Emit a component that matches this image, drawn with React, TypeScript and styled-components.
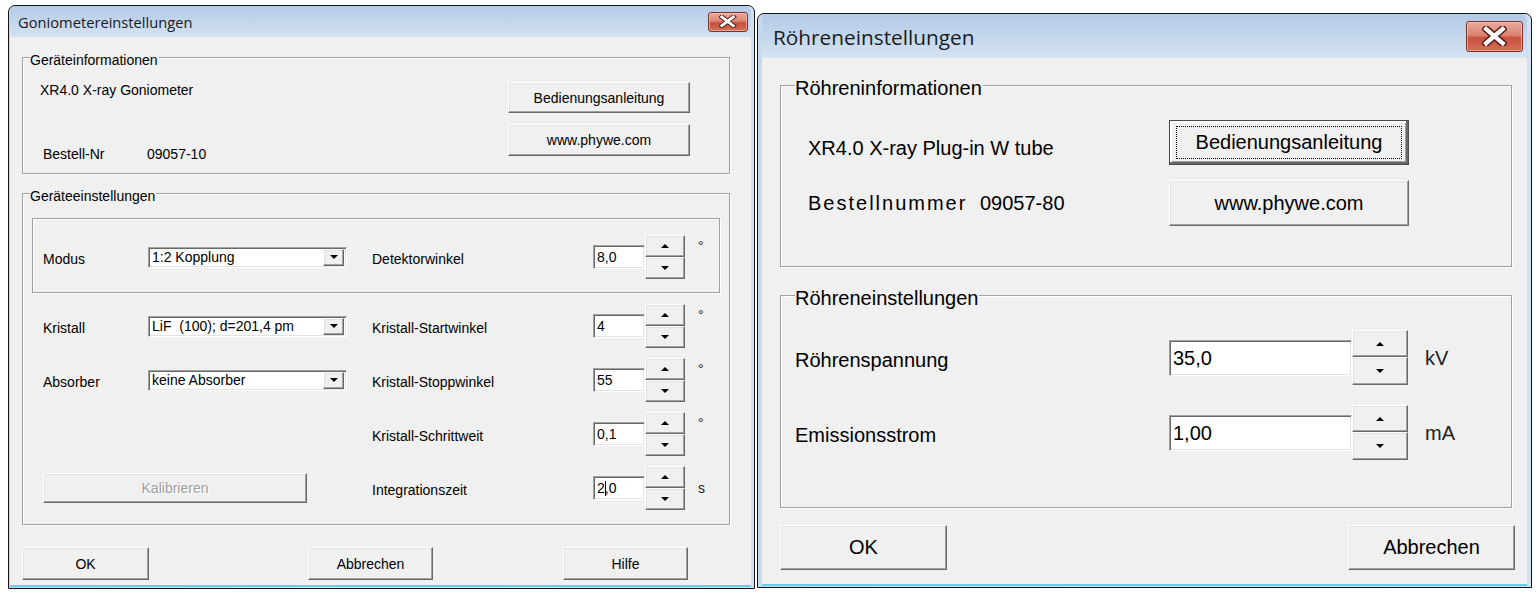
import React from 'react';
import styled, { createGlobalStyle, css } from 'styled-components';

/* ------------------------------------------------------------------ */
/* Global                                                             */
/* ------------------------------------------------------------------ */

const GlobalStyle = createGlobalStyle`
  html, body {
    margin: 0;
    padding: 0;
    background: #ffffff;
  }
  body {
    font-family: "Liberation Sans", Arial, sans-serif;
    color: #000;
  }
  * {
    box-sizing: border-box;
  }
`;

const FACE = '#f0f0f0';

/* classic 3D bevels */
const raised = css`
  background: ${FACE};
  border: 1px solid;
  border-color: #ffffff #696969 #696969 #ffffff;
  box-shadow: inset -1px -1px 0 #a0a0a0, inset 1px 1px 0 #e3e3e3;
`;

const sunken = css`
  background: #ffffff;
  border: 1px solid;
  border-color: #a0a0a0 #ffffff #ffffff #a0a0a0;
  box-shadow: inset 1px 1px 0 #696969, inset -1px -1px 0 #e3e3e3;
`;

/* ------------------------------------------------------------------ */
/* Window chrome                                                      */
/* ------------------------------------------------------------------ */

const Screen = styled.div`
  display: flex;
  align-items: flex-start;
  width: 1540px;
  height: 593px;
  overflow: hidden;
`;

const Window = styled.div<{ $w: number; $h: number; $mt: number; $ml: number; $side: number }>`
  width: ${(p) => p.$w}px;
  height: ${(p) => p.$h}px;
  margin: ${(p) => p.$mt}px 0 0 ${(p) => p.$ml}px;
  display: flex;
  flex-direction: column;
  border: 1px solid #141414;
  border-radius: 7px 7px 0 0;
  padding: 0 ${(p) => p.$side}px 1px ${(p) => (p.$side > 3 ? p.$side : 1)}px;
  background: linear-gradient(to right, #c9d9ec, #dbe6f3 40%, #d3e0f0);
`;

const TitleBar = styled.div<{ $h: number; $pl: number }>`
  height: ${(p) => p.$h}px;
  flex: none;
  display: flex;
  align-items: center;
  justify-content: space-between;
  padding: 0 0 0 ${(p) => p.$pl}px;
  background: linear-gradient(to bottom, #b3cae5 0%, #c1d5ec 45%, #d5e3f2 100%);
  border-radius: 6px 6px 0 0;
`;

const Title = styled.span<{ $fs: number }>`
  font-family: "Open Sans", "Noto Sans", sans-serif;
  font-size: ${(p) => p.$fs}px;
  color: #1b1b1b;
  line-height: 1.2;
  margin-top: 2px;
`;

const CloseButton = styled.div<{ $w: number; $h: number; $mr: number }>`
  width: ${(p) => p.$w}px;
  height: ${(p) => p.$h}px;
  margin-right: ${(p) => p.$mr}px;
  display: flex;
  align-items: center;
  justify-content: center;
  border: 1px solid #7a3328;
  border-radius: 3px;
  background: linear-gradient(to bottom, #e9a99c 0%, #dc8474 45%, #c7503c 55%, #d56f57 100%);
  box-shadow: inset 0 0 0 1px rgba(255, 210, 200, 0.55);

  svg {
    width: 45%;
    height: 70%;
  }
`;

const Client = styled.div<{ $pt: number; $pl: number }>`
  flex: 1;
  display: flex;
  flex-direction: column;
  align-items: flex-start;
  background: ${FACE};
  border-bottom: 2px solid #6ccbe9;
  padding: ${(p) => p.$pt}px 0 0 ${(p) => p.$pl}px;
`;

/* ------------------------------------------------------------------ */
/* Group boxes                                                        */
/* ------------------------------------------------------------------ */

const Group = styled.div<{ $w: number; $h: number; $mt?: number }>`
  position: relative;
  width: ${(p) => p.$w}px;
  height: ${(p) => p.$h}px;
  margin-top: ${(p) => p.$mt ?? 0}px;
  border: 1px solid #a0a0a0;
  box-shadow: inset 1px 1px 0 #ffffff, 1px 1px 0 #ffffff;
`;

const Legend = styled.span<{ $fs: number; $left: number; $top: number }>`
  position: absolute;
  left: ${(p) => p.$left}px;
  top: ${(p) => p.$top}px;
  font-size: ${(p) => p.$fs}px;
  line-height: ${(p) => Math.round(p.$fs * 1.18)}px;
  background: ${FACE};
  padding-right: 1px;
  white-space: nowrap;
`;

const InnerBox = styled.div`
  width: 688px;
  border: 1px solid #a0a0a0;
  box-shadow: inset 1px 1px 0 #ffffff, 1px 1px 0 #ffffff;
  padding: 16px 0 13px 10px;
`;

/* ------------------------------------------------------------------ */
/* Controls                                                           */
/* ------------------------------------------------------------------ */

const Button = styled.button<{ $w: number; $h: number; $fs: number; $ml?: number; $focused?: boolean }>`
  ${raised};
  position: relative;
  width: ${(p) => p.$w}px;
  height: ${(p) => p.$h}px;
  margin-left: ${(p) => p.$ml ?? 0}px;
  padding: 0;
  font-family: "Liberation Sans", Arial, sans-serif;
  font-size: ${(p) => p.$fs}px;
  color: #000;
  flex: none;

  &:disabled {
    color: #a0a0a0;
    text-shadow: 1px 1px 0 #ffffff;
  }

  ${(p) =>
    p.$focused &&
    css`
      border-color: #4a4a4a;
      box-shadow: inset -2px -2px 0 #696969, inset 2px 2px 0 #ffffff, inset -3px -3px 0 #a0a0a0;
      &::after {
        content: '';
        position: absolute;
        inset: 5px 6px;
        border: 1px dotted #000;
      }
    `}
`;

const Arrow = styled.span<{ $dir: 'up' | 'down'; $size: number }>`
  width: 0;
  height: 0;
  border-left: ${(p) => p.$size}px solid transparent;
  border-right: ${(p) => p.$size}px solid transparent;
  ${(p) =>
    p.$dir === 'up'
      ? css`border-bottom: ${Math.ceil(p.$size * 0.8)}px solid #000;`
      : css`border-top: ${Math.ceil(p.$size * 0.8)}px solid #000;`}
`;

const Combo = styled.div`
  ${sunken};
  width: 199px;
  height: 21px;
  display: flex;
  align-items: center;
  justify-content: space-between;
  padding: 2px 2px 2px 3px;
  font-size: 14px;
  white-space: pre;
`;

const ComboDrop = styled.span`
  ${raised};
  width: 21px;
  height: 17px;
  display: flex;
  align-items: center;
  justify-content: center;
`;

const SpinField = styled.div`
  display: flex;
  align-items: center;
`;

const NumInput = styled.div<{ $w: number; $h: number; $fs: number }>`
  ${sunken};
  width: ${(p) => p.$w}px;
  height: ${(p) => p.$h}px;
  display: flex;
  align-items: center;
  padding-left: 3px;
  font-size: ${(p) => p.$fs}px;
`;

const SpinStack = styled.div<{ $w: number }>`
  width: ${(p) => p.$w}px;
  display: flex;
  flex-direction: column;
`;

const SpinHalf = styled.div<{ $h: number }>`
  ${raised};
  height: ${(p) => p.$h}px;
  display: flex;
  align-items: center;
  justify-content: center;
`;

const Caret = styled.span`
  display: inline-block;
  width: 1px;
  height: 15px;
  background: #000;
  margin: 0 -1px 0 0;
  vertical-align: -2px;
`;

/* ------------------------------------------------------------------ */
/* Text / layout pieces                                               */
/* ------------------------------------------------------------------ */

const InfoGroupBody = styled.div<{ $pt: number; $pr: number; $pl: number }>`
  display: flex;
  justify-content: space-between;
  padding: ${(p) => p.$pt}px ${(p) => p.$pr}px 0 ${(p) => p.$pl}px;
`;

const InfoColumn = styled.div<{ $pt: number; $gap: number; $fs: number }>`
  display: flex;
  flex-direction: column;
  gap: ${(p) => p.$gap}px;
  padding-top: ${(p) => p.$pt}px;
  font-size: ${(p) => p.$fs}px;
  line-height: ${(p) => Math.round(p.$fs * 1.18)}px;
`;

const InfoLine = styled.div`
  display: flex;
  white-space: nowrap;
`;

const InfoKey = styled.span<{ $w: number; $pl?: number; $ls?: number }>`
  width: ${(p) => p.$w}px;
  padding-left: ${(p) => p.$pl ?? 0}px;
  letter-spacing: ${(p) => p.$ls ?? 0}px;
`;

const ButtonColumn = styled.div<{ $pt: number; $gap: number }>`
  display: flex;
  flex-direction: column;
  gap: ${(p) => p.$gap}px;
  padding-top: ${(p) => p.$pt}px;
`;

const SettingsBody = styled.div`
  padding: 24px 9px 0 9px;
`;

const Rows = styled.div<{ $pt: number; $pl: number; $gap: number }>`
  display: flex;
  flex-direction: column;
  gap: ${(p) => p.$gap}px;
  padding: ${(p) => p.$pt}px 0 0 ${(p) => p.$pl}px;
`;

const Row = styled.div<{ $cols: string; $h: number; $fs: number }>`
  display: grid;
  grid-template-columns: ${(p) => p.$cols};
  align-items: center;
  height: ${(p) => p.$h}px;
  font-size: ${(p) => p.$fs}px;
  line-height: ${(p) => Math.round(p.$fs * 1.18)}px;
`;

const RowLabel = styled.span<{ $col?: number }>`
  grid-column: ${(p) => p.$col ?? 'auto'};
  padding-top: 4px;
  white-space: nowrap;
`;

const WideCell = styled.div`
  grid-column: 1 / 4;
`;

const Unit = styled.span<{ $ml: number; $raised?: boolean }>`
  margin-left: ${(p) => p.$ml}px;
  align-self: ${(p) => (p.$raised ? 'start' : 'center')};
  padding-top: ${(p) => (p.$raised ? 3 : 0)}px;
  color: #222;
`;

const FooterRow = styled.div<{ $mt: number }>`
  display: flex;
  margin-top: ${(p) => p.$mt}px;
`;

/* ------------------------------------------------------------------ */
/* Small composites                                                   */
/* ------------------------------------------------------------------ */

const CloseIcon: React.FC = () => (
  <svg viewBox="0 0 12 10" preserveAspectRatio="none">
    <path d="M2 1.5 L10 8.5 M10 1.5 L2 8.5" stroke="#5a1f17" strokeWidth="3.6" strokeLinecap="square" />
    <path d="M2 1.5 L10 8.5 M10 1.5 L2 8.5" stroke="#ffffff" strokeWidth="2.1" strokeLinecap="square" />
  </svg>
);

const Spinner: React.FC<{
  value: React.ReactNode;
  iw: number;
  ih: number;
  sw: number;
  up: number;
  down: number;
  fs: number;
  arrow: number;
}> = ({ value, iw, ih, sw, up, down, fs, arrow }) => (
  <SpinField>
    <NumInput $w={iw} $h={ih} $fs={fs}>
      {value}
    </NumInput>
    <SpinStack $w={sw}>
      <SpinHalf $h={up}>
        <Arrow $dir="up" $size={arrow} />
      </SpinHalf>
      <SpinHalf $h={down}>
        <Arrow $dir="down" $size={arrow} />
      </SpinHalf>
    </SpinStack>
  </SpinField>
);

const SmallSpin: React.FC<{ value: React.ReactNode }> = ({ value }) => (
  <Spinner value={value} iw={52} ih={24} sw={40} up={22} down={22} fs={14} arrow={4} />
);

const BigSpin: React.FC<{ value: string }> = ({ value }) => (
  <Spinner value={value} iw={183} ih={36} sw={56} up={27} down={28} fs={20} arrow={4} />
);

const DropList: React.FC<{ value: string }> = ({ value }) => (
  <Combo>
    <span>{value}</span>
    <ComboDrop>
      <Arrow $dir="down" $size={4} />
    </ComboDrop>
  </Combo>
);

/* ------------------------------------------------------------------ */
/* Dialogs                                                            */
/* ------------------------------------------------------------------ */

const GONIO_COLS = '105px 199px 25px 221px 92px auto';
const TUBE_COLS = '374px 239px auto';

const GoniometerDialog: React.FC = () => (
  <Window $w={747} $h={584} $mt={5} $ml={8} $side={3}>
    <TitleBar $h={31} $pl={8}>
      <Title $fs={14.7}>Goniometereinstellungen</Title>
      <CloseButton $w={40} $h={20} $mr={3}>
        <CloseIcon />
      </CloseButton>
    </TitleBar>

    <Client $pt={20} $pl={12}>
      <Group $w={708} $h={117}>
        <Legend $fs={14} $left={7} $top={-6}>
          Geräteinformationen
        </Legend>
        <InfoGroupBody $pt={24} $pr={39} $pl={17}>
          <InfoColumn $pt={0} $gap={47} $fs={14}>
            <InfoLine>XR4.0 X-ray Goniometer</InfoLine>
            <InfoLine>
              <InfoKey $w={107} $pl={3}>
                Bestell-Nr
              </InfoKey>
              <span>09057-10</span>
            </InfoLine>
          </InfoColumn>
          <ButtonColumn $pt={0} $gap={11}>
            <Button $w={182} $h={31} $fs={14}>
              Bedienungsanleitung
            </Button>
            <Button $w={182} $h={32} $fs={14}>
              www.phywe.com
            </Button>
          </ButtonColumn>
        </InfoGroupBody>
      </Group>

      <Group $w={708} $h={332} $mt={19}>
        <Legend $fs={14} $left={7} $top={-6}>
          Geräteeinstellungen
        </Legend>
        <SettingsBody>
          <InnerBox>
            <Row $cols={GONIO_COLS} $h={44} $fs={14}>
              <RowLabel>Modus</RowLabel>
              <DropList value="1:2 Kopplung" />
              <RowLabel $col={4}>Detektorwinkel</RowLabel>
              <SmallSpin value="8,0" />
              <Unit $ml={13} $raised>
                °
              </Unit>
            </Row>
          </InnerBox>

          <Rows $pt={11} $pl={11} $gap={10}>
            <Row $cols={GONIO_COLS} $h={44} $fs={14}>
              <RowLabel>Kristall</RowLabel>
              <DropList value="LiF  (100); d=201,4 pm" />
              <RowLabel $col={4}>Kristall-Startwinkel</RowLabel>
              <SmallSpin value="4" />
              <Unit $ml={13} $raised>
                °
              </Unit>
            </Row>
            <Row $cols={GONIO_COLS} $h={44} $fs={14}>
              <RowLabel>Absorber</RowLabel>
              <DropList value="keine Absorber" />
              <RowLabel $col={4}>Kristall-Stoppwinkel</RowLabel>
              <SmallSpin value="55" />
              <Unit $ml={13} $raised>
                °
              </Unit>
            </Row>
            <Row $cols={GONIO_COLS} $h={44} $fs={14}>
              <RowLabel $col={4}>Kristall-Schrittweit</RowLabel>
              <SmallSpin value="0,1" />
              <Unit $ml={13} $raised>
                °
              </Unit>
            </Row>
            <Row $cols={GONIO_COLS} $h={44} $fs={14}>
              <WideCell>
                <Button $w={264} $h={30} $fs={14} disabled>
                  Kalibrieren
                </Button>
              </WideCell>
              <RowLabel $col={4}>Integrationszeit</RowLabel>
              <SmallSpin
                value={
                  <>
                    2<Caret />,0
                  </>
                }
              />
              <Unit $ml={13}>s</Unit>
            </Row>
          </Rows>
        </SettingsBody>
      </Group>

      <FooterRow $mt={22}>
        <Button $w={127} $h={33} $fs={14}>
          OK
        </Button>
        <Button $w={125} $h={33} $fs={14} $ml={159}>
          Abbrechen
        </Button>
        <Button $w={125} $h={33} $fs={14} $ml={130}>
          Hilfe
        </Button>
      </FooterRow>
    </Client>
  </Window>
);

const TubeDialog: React.FC = () => (
  <Window $w={775} $h={575} $mt={13} $ml={2} $side={4}>
    <TitleBar $h={44} $pl={11}>
      <Title $fs={20.8}>Röhreneinstellungen</Title>
      <CloseButton $w={57} $h={31} $mr={4}>
        <CloseIcon />
      </CloseButton>
    </TitleBar>

    <Client $pt={27} $pl={18}>
      <Group $w={732} $h={182}>
        <Legend $fs={20} $left={14} $top={-10}>
          Röhreninformationen
        </Legend>
        <InfoGroupBody $pt={0} $pr={102} $pl={27}>
          <InfoColumn $pt={50} $gap={31} $fs={20}>
            <InfoLine>XR4.0 X-ray Plug-in W tube</InfoLine>
            <InfoLine>
              <InfoKey $w={172} $ls={2}>
                Bestellnummer
              </InfoKey>
              <span>09057-80</span>
            </InfoLine>
          </InfoColumn>
          <ButtonColumn $pt={34} $gap={15}>
            <Button $w={240} $h={45} $fs={20} $focused>
              Bedienungsanleitung
            </Button>
            <Button $w={240} $h={46} $fs={20}>
              www.phywe.com
            </Button>
          </ButtonColumn>
        </InfoGroupBody>
      </Group>

      <Group $w={732} $h={213} $mt={28}>
        <Legend $fs={20} $left={14} $top={-10}>
          Röhreneinstellungen
        </Legend>
        <Rows $pt={34} $pl={14} $gap={20}>
          <Row $cols={TUBE_COLS} $h={55} $fs={20}>
            <RowLabel>Röhrenspannung</RowLabel>
            <BigSpin value="35,0" />
            <Unit $ml={17}>kV</Unit>
          </Row>
          <Row $cols={TUBE_COLS} $h={55} $fs={20}>
            <RowLabel>Emissionsstrom</RowLabel>
            <BigSpin value="1,00" />
            <Unit $ml={17}>mA</Unit>
          </Row>
        </Rows>
      </Group>

      <FooterRow $mt={17}>
        <Button $w={167} $h={45} $fs={20}>
          OK
        </Button>
        <Button $w={167} $h={45} $fs={20} $ml={401}>
          Abbrechen
        </Button>
      </FooterRow>
    </Client>
  </Window>
);

export default function App() {
  return (
    <>
      <GlobalStyle />
      <Screen>
        <GoniometerDialog />
        <TubeDialog />
      </Screen>
    </>
  );
}
